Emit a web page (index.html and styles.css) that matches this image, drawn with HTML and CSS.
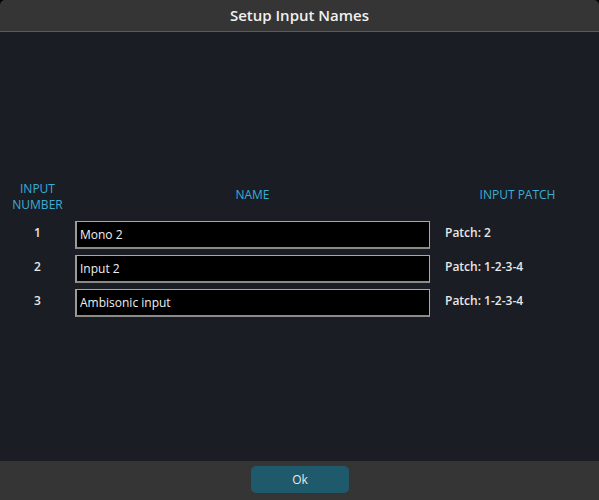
FILE: index.html
```html
<!DOCTYPE html>
<html>
<head>
<meta charset="utf-8">
<link rel="stylesheet" href="styles.css">
</head>
<body>
<div class="dialog">
  <div class="titlebar">Setup Input Names</div>
  <div class="content">
    <div class="table">
      <div class="hdr hdr-num">INPUT<br>NUMBER</div>
      <div class="hdr hdr-name">NAME</div>
      <div class="hdr hdr-patch">INPUT PATCH</div>

      <div class="num">1</div>
      <div class="field"><input class="name-input" value="Mono 2"></div>
      <div class="patch">Patch: 2</div>

      <div class="num">2</div>
      <div class="field"><input class="name-input" value="Input 2"></div>
      <div class="patch">Patch: 1-2-3-4</div>

      <div class="num">3</div>
      <div class="field"><input class="name-input" value="Ambisonic input"></div>
      <div class="patch">Patch: 1-2-3-4</div>
    </div>
  </div>
  <div class="footer">
    <button class="ok">Ok</button>
  </div>
</div>
</body>
</html>
```
FILE: styles.css
```css
html, body {
  margin: 0;
  padding: 0;
  background: #000;
  width: 599px;
  height: 500px;
  overflow: hidden;
  font-family: "Open Sans", "Noto Sans", sans-serif;
}
.dialog {
  width: 599px;
  height: 500px;
  display: flex;
  flex-direction: column;
  border-radius: 5px 5px 0 0;
  overflow: hidden;
}
.titlebar {
  height: 31px;
  flex: none;
  background: #353535;
  border-bottom: 1px solid #5a5a5a;
  color: #f0f0f0;
  font-size: 15px;
  font-weight: 600;
  line-height: 31px;
  text-align: center;
}
.content {
  flex: 1;
  background: #1a1d24;
  padding-top: 149px;
  box-sizing: border-box;
}
.table {
  display: grid;
  grid-template-columns: 75px 355px 169px;
  grid-template-rows: 34px 28px 28px 28px;
  row-gap: 6px;
}
.hdr {
  color: #3aaed6;
  font-size: 12px;
  line-height: 16px;
  text-align: center;
  align-self: start;
}
.hdr-num {
  margin-top: 0;
}
.hdr-name, .hdr-patch {
  margin-top: 6px;
}
.hdr-patch { padding-left: 6px; }
.num {
  color: #e8e8e8;
  font-size: 12px;
  font-weight: 600;
  text-align: center;
  align-self: start;
  margin-top: 3px;
}
.field { height: 28px; }
.name-input {
  box-sizing: border-box;
  width: 355px;
  height: 28px;
  margin: 0;
  background: #000;
  border: 1px solid #a8a8a8;
  border-bottom: 2px solid #8a8a8a;
  border-left: 2px solid #9a9a9a;
  color: #f0f0f0;
  font-family: "Open Sans", "Noto Sans", sans-serif;
  font-size: 12px;
  padding: 0 0 0 3px;
  outline: none;
}
.patch {
  color: #e8e8e8;
  font-size: 12px;
  font-weight: 600;
  padding-left: 15px;
  align-self: start;
  margin-top: 3px;
}
.footer {
  height: 39px;
  flex: none;
  background: #353535;
  display: flex;
  justify-content: center;
  align-items: flex-start;
  padding-top: 5px;
  box-sizing: border-box;
}
.ok {
  width: 98px;
  height: 27px;
  border: none;
  border-radius: 5px;
  background: #1e5a6c;
  color: #e8e8e8;
  font-family: "Open Sans", "Noto Sans", sans-serif;
  font-size: 12px;
  padding: 0;
  margin-left: 1px;
}
```
